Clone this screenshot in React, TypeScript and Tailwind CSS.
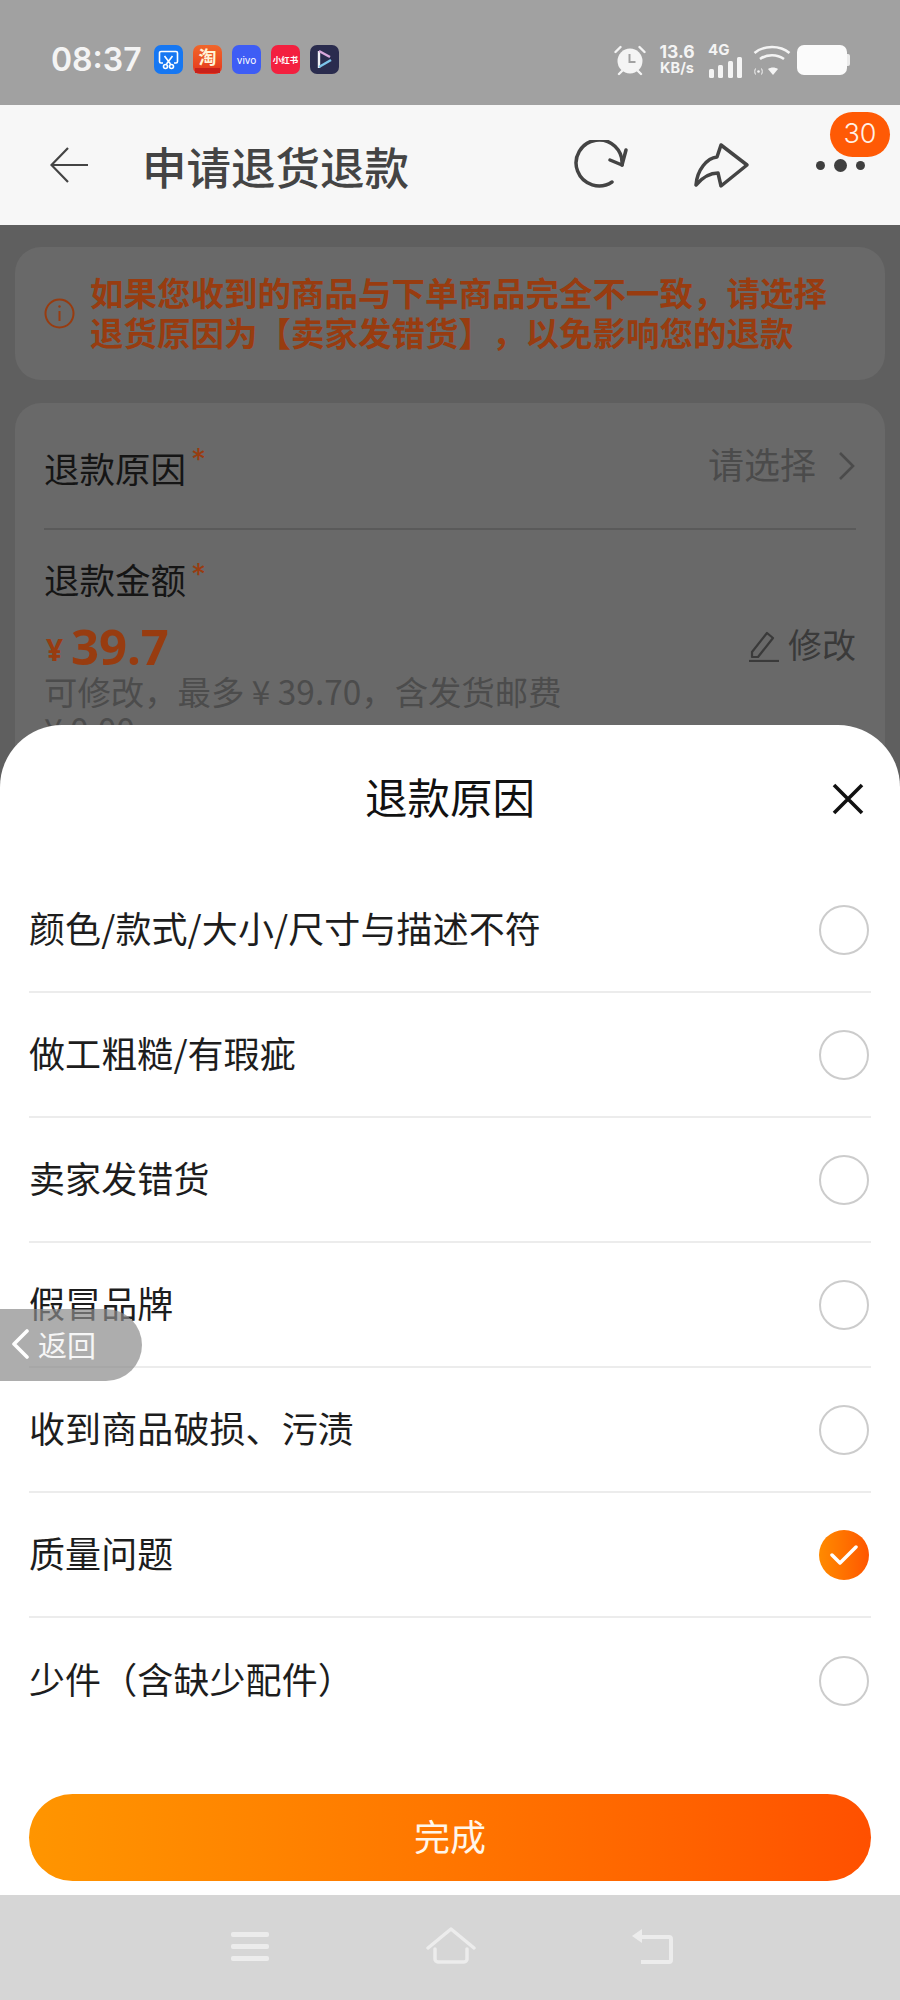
// App.tsx
const reasons = [
  { name: '颜色/款式/大小/尺寸与描述不符' },
  { name: '做工粗糙/有瑕疵' },
  { name: '卖家发错货' },
  { name: '假冒品牌' },
  { name: '收到商品破损、污渍' },
  { name: '质量问题', checked: true },
  { name: '少件（含缺少配件）' },
]

const StatusBar = () => (
  <div className="flex h-[105px] shrink-0 items-center bg-[#a1a1a1] pl-[51px] pr-[50px] pt-[14px] text-white">
    <span className="w-[103px] font-['Inter',sans-serif] text-[32px] font-semibold leading-none text-[#f4f4f4]">08:37</span>
    <div className="flex gap-[10px]">
      <div className="flex h-[29px] w-[29px] items-center justify-center rounded-[7px] bg-[#1677f2]">
        <svg width="21" height="20" viewBox="0 0 21 20" fill="none" stroke="white" strokeWidth="1.6">
          <path d="M5 13H3a1.5 1.5 0 0 1-1.5-1.5V3A1.5 1.5 0 0 1 3 1.5h15A1.5 1.5 0 0 1 19.5 3v8.5A1.5 1.5 0 0 1 18 13h-2" />
          <path d="M6.5 6l6 8M14.5 6l-6 8" />
          <circle cx="7.5" cy="16.5" r="2" />
          <circle cx="13.5" cy="16.5" r="2" />
        </svg>
      </div>
      <div className="relative flex h-[29px] w-[29px] items-start justify-center rounded-[7px] bg-gradient-to-b from-[#f0662a] to-[#e6331c]">
        <span className="text-[18px] font-bold leading-[22px] text-[#fff3d6]">淘</span>
        <span className="absolute bottom-[1px] h-[5px] w-[25px] bg-[#c9211a]" />
      </div>
      <div className="flex h-[29px] w-[29px] items-center justify-center rounded-[7px] bg-[#3e5df5] font-['Inter',sans-serif] text-[10px] leading-none text-white">vivo</div>
      <div className="flex h-[29px] w-[29px] items-center justify-center rounded-[7px] bg-[#f3203f] text-[8.5px] font-bold leading-none text-white">
        <span className="whitespace-nowrap">小红书</span>
      </div>
      <div className="flex h-[29px] w-[29px] items-center justify-center rounded-[7px] bg-[#2a2c4e]">
        <svg width="19" height="21" viewBox="0 0 19 21" fill="none" strokeWidth="2.4">
          <path d="M4 2v17" stroke="#f0f0f5" />
          <path d="M4 2l11 6" stroke="#d9a8dc" />
          <path d="M4 18l12-7" stroke="#7cc4ea" />
        </svg>
      </div>
    </div>
    <div className="ml-auto flex items-center text-[#f4f4f4]">
      <svg width="32" height="32" viewBox="0 0 32 32">
        <circle cx="16" cy="17" r="12.5" fill="#f4f4f4" />
        <path d="M15.5 10v8h6" fill="none" stroke="#a1a1a1" strokeWidth="2" />
        <path d="M1.5 8l5-5M30.5 8l-5-5M5 30l3-3M27 30l-3-3" stroke="#f4f4f4" strokeWidth="2.4" strokeLinecap="round" />
      </svg>
      <div className="ml-[12px] flex w-[38px] flex-col items-center font-['Inter',sans-serif] font-bold leading-none">
        <span className="text-[17.5px] leading-[17px]">13.6</span>
        <span className="text-[14.5px] leading-[16px]">KB/s</span>
      </div>
      <div className="ml-[12px] flex w-[36px] flex-col font-['Inter',sans-serif]">
        <span className="text-[15px] font-bold leading-[15px]">4G</span>
        <svg width="35" height="21" viewBox="0 0 35 21" fill="#f4f4f4">
          <rect x="1" y="12" width="5" height="9" rx="1.5" />
          <rect x="10" y="8" width="5" height="13" rx="1.5" />
          <rect x="20" y="4" width="5" height="17" rx="1.5" />
          <rect x="29" y="0" width="5" height="21" rx="1.5" />
        </svg>
      </div>
      <svg className="ml-[9px]" width="38" height="32" viewBox="0 0 38 32" fill="none" stroke="#f4f4f4" strokeWidth="2.6">
        <path d="M1.5 9C11 1 27 1 36.5 9" />
        <path d="M7 15c7-5 17-5 24 0" />
        <path d="M20 31l-5-6c3-2 7-2 10 0z" fill="#f4f4f4" stroke="none" />
        <circle cx="5.5" cy="27.5" r="1.3" fill="#f4f4f4" stroke="none" />
        <path d="M2.5 24.5c-1 2-1 4 0 6M8.5 24.5c1 2 1 4 0 6" strokeWidth="1" />
      </svg>
      <div className="ml-[6px] flex items-center">
        <div className="h-[30px] w-[50px] rounded-[7px] bg-[#fbfbfb]" />
        <div className="h-[12px] w-[3px] rounded-r-[2px] bg-[#ececec]" />
      </div>
    </div>
  </div>
)

const Header = () => (
  <div className="relative flex h-[120px] shrink-0 items-center bg-[#f7f7f7] pl-[50px] text-[#444444]">
    <svg width="38" height="36" viewBox="0 0 38 36" fill="none" stroke="#444444" strokeWidth="2.2">
      <path d="M18 1L1.5 18 18 35M1.5 18H38" />
    </svg>
    <h1 className="ml-[54px] mt-[2px] text-[44.5px] font-medium leading-none">申请退货退款</h1>
    <div className="ml-auto flex items-center">
      <svg width="56" height="50" viewBox="0 0 56 50" fill="none" stroke="#444444" strokeWidth="3.5" strokeLinecap="round" strokeLinejoin="round">
        <path d="M39 42A23 23 0 1 1 49 25" />
        <path d="M37 20l12 5 4-15" />
      </svg>
      <svg className="ml-[62px]" width="60" height="50" viewBox="0 0 60 50" fill="none" stroke="#444444" strokeWidth="3.5" strokeLinejoin="round">
        <path d="M30 5l26 20-26 21-3-13C18 33 11 38 5 45c1-15 11-27 21-28z" />
      </svg>
      <div className="ml-[65px] mr-[35px] flex items-center gap-[9px]">
        <span className="h-[9px] w-[9px] rounded-full bg-[#3f3f3f]" />
        <span className="h-[13px] w-[13px] rounded-full bg-[#3f3f3f]" />
        <span className="h-[9px] w-[9px] rounded-full bg-[#3f3f3f]" />
      </div>
    </div>
    {/* message count */}
    <span className="absolute left-[830px] top-[7px] flex h-[45px] w-[60px] items-center justify-center rounded-full bg-[#ff5a05] font-['Inter',sans-serif] text-[27px] font-light text-[#fff1e6]">30</span>
  </div>
)

const RefundForm = () => (
  <div className="min-h-0 flex-1 overflow-hidden px-[15px] pt-[22px]">
    {/* notice */}
    <div className="flex h-[133px] items-center rounded-[26px] bg-[#696969] pl-[29px]">
      <svg width="31" height="31" viewBox="0 0 31 31" fill="none" stroke="#983c10" strokeWidth="2">
        <circle cx="15.5" cy="15.5" r="14" />
        <path d="M15.5 13v10" />
        <circle cx="15.5" cy="8.5" r="1.2" fill="#983c10" stroke="none" />
      </svg>
      <p className="mb-[3px] ml-[15px] text-[33.5px] font-bold leading-[40px] text-[#983c10] [text-spacing-trim:space-all]">
        如果您收到的商品与下单商品完全不一致，请选择
        <br />
        退货原因为【卖家发错货】，以免影响您的退款
      </p>
    </div>

    {/* form */}
    <div className="mt-[23px] rounded-t-[26px] bg-[#696969] px-[29px]">
      <div className="flex h-[127px] items-center border-b-2 border-[#5a5a5a]">
        <span className="mt-[5px] text-[35.5px] leading-none text-[#151515]">退款原因</span>
        <span className="mb-[14px] ml-[5px] font-['Inter',sans-serif] text-[30px] leading-none text-[#983c10]">*</span>
        <span className="ml-auto mt-[-5px] text-[36px] leading-none text-[#4b4b4b]">请选择</span>
        <svg className="ml-[22px]" width="18" height="30" viewBox="0 0 18 30" fill="none" stroke="#4b4b4b" strokeWidth="2.6">
          <path d="M2 2l13 13L2 28" />
        </svg>
      </div>
      <div className="flex items-center pt-[29px]">
        <span className="text-[35.5px] leading-[40px] text-[#151515]">退款金额</span>
        <span className="mb-[10px] ml-[5px] font-['Inter',sans-serif] text-[30px] leading-none text-[#983c10]">*</span>
      </div>
      <div className="mt-[17px] flex h-[60px] items-center text-[#983c10]">
        <span className="mt-[8px] w-[27px] pl-[2px] font-['Noto_Sans',sans-serif] text-[30px] font-bold leading-none">¥</span>
        <span className="font-['Noto_Sans',sans-serif] text-[49px] font-bold leading-none">39.7</span>
        <svg className="ml-auto" width="32" height="32" viewBox="0 0 32 32" fill="none" stroke="#3a3a3a" strokeWidth="2.2" strokeLinejoin="round">
          <path d="M4 22L19 3l6 5-15 19H4z" />
          <path d="M1 31h30" />
        </svg>
        <span className="mb-[4px] ml-[8px] text-[34px] leading-none text-[#3a3a3a]">修改</span>
      </div>
      <p className="mt-[-4px] text-[33.4px] leading-[38px] text-[#4c4c4c]">
        可修改，最多 ¥ 39.70，含发货邮费
        <br />¥ 0.00
      </p>
    </div>
  </div>
)

const ReasonRow = ({ name, checked, last }: { name: string; checked?: boolean; last: boolean }) => (
  <div className={`flex h-[125px] items-center justify-between ${last ? '' : 'border-b-2 border-[#ececec]'}`}>
    <span className="mb-[5px] text-[36px] leading-none tracking-[0.1px] text-[#1d1d1d]">{name}</span>
    {checked ? (
      <div className="mr-[2px] flex h-[50px] w-[50px] items-center justify-center rounded-full bg-gradient-to-r from-[#ff8a00] to-[#ff5500]">
        <svg width="28" height="22" viewBox="0 0 28 22" fill="none" stroke="white" strokeWidth="3.5" strokeLinecap="round" strokeLinejoin="round">
          <path d="M2 11l8 8L26 3" />
        </svg>
      </div>
    ) : (
      <div className="mr-[2px] h-[50px] w-[50px] rounded-full border-2 border-[#cccccc]" />
    )}
  </div>
)

const ReasonSheet = () => (
  <div className="absolute left-0 top-[725px] h-[1170px] w-[900px] rounded-t-[62px] bg-white">
    <div className="relative flex h-[143px] items-center justify-center">
      <h2 className="text-[42.5px] font-normal leading-none text-[#111111]">退款原因</h2>
      <svg className="absolute left-[832px] top-[58px]" width="32" height="32" viewBox="0 0 32 32" fill="none" stroke="#111111" strokeWidth="3.6">
        <path d="M2 2l28 28M30 2L2 30" />
      </svg>
    </div>
    <div className="px-[29px]">
      {reasons.map((r, i) => (
        <ReasonRow key={r.name} name={r.name} checked={r.checked} last={i === reasons.length - 1} />
      ))}
    </div>
    <button className="ml-[29px] mt-[51px] flex h-[87px] w-[842px] items-center justify-center rounded-full bg-gradient-to-r from-[#ff9500] to-[#ff5000] pb-[5px] text-[36px] leading-none text-[#fff6ea]">
      完成
    </button>
  </div>
)

const NavBar = () => (
  <div className="flex h-[105px] shrink-0 items-start bg-[#d6d6d6] pl-[231px] pt-[32px]">
    <div className="mt-[5px] flex h-[29px] w-[38px] flex-col justify-between">
      <span className="h-[5px] rounded-[2px] bg-[#ececec]" />
      <span className="h-[5px] rounded-[2px] bg-[#ececec]" />
      <span className="h-[5px] rounded-[2px] bg-[#ececec]" />
    </div>
    <svg className="ml-[157px]" width="50" height="37" viewBox="0 0 50 37" fill="none" stroke="#ececec" strokeWidth="3.5" strokeLinecap="round" strokeLinejoin="round">
      <path d="M2 21L25 2l23 19" />
      <path d="M9 22v10a3 3 0 0 0 3 3h26a3 3 0 0 0 3-3V22" />
    </svg>
    <svg className="ml-[155px] mt-[1px]" width="42" height="36" viewBox="0 0 42 36" fill="none" stroke="#ececec" strokeWidth="4" strokeLinejoin="round">
      <path d="M8 9h30a2 2 0 0 1 2 2v21a2 2 0 0 1-2 2H10" />
      <path d="M1 8l10-7v14z" fill="#ececec" stroke="none" />
    </svg>
  </div>
)

export default function App() {
  return (
    <div className="relative flex h-[2000px] w-[900px] flex-col overflow-hidden bg-[#5f5f5f] font-['Noto_Sans_CJK_SC','Noto_Sans',sans-serif]">
      <StatusBar />
      <Header />
      <RefundForm />
      <NavBar />
      <ReasonSheet />

      {/* floating back pill */}
      <div className="absolute left-0 top-[1309px] flex h-[72px] w-[142px] items-center rounded-r-full bg-[#8a8a8a]/70 pb-[2px] pl-[11px]">
        <svg width="18" height="30" viewBox="0 0 18 30" fill="none" stroke="white" strokeWidth="3.6" strokeLinecap="round" strokeLinejoin="round">
          <path d="M16 2L3 15l13 13" />
        </svg>
        <span className="ml-[9px] text-[29px] leading-none text-[#f6f6f6]">返回</span>
      </div>
    </div>
  )
}
